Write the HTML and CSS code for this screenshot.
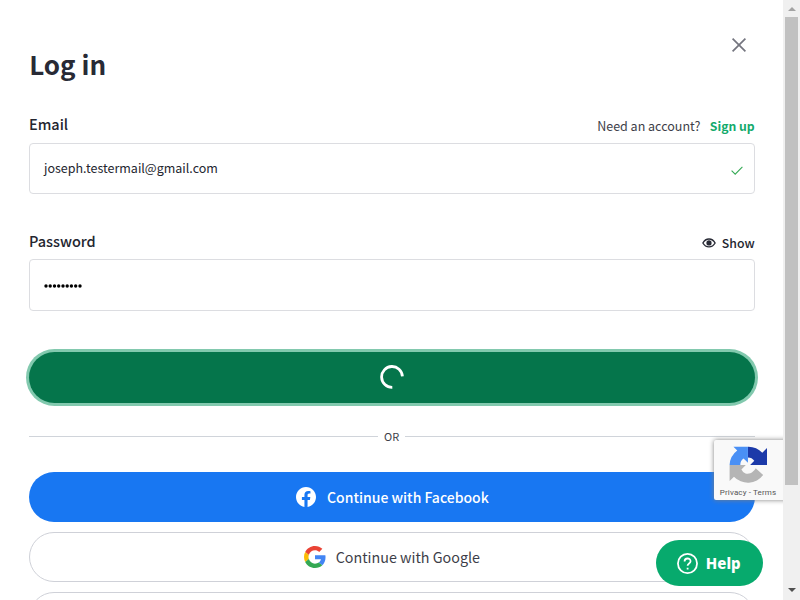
FILE: index.html
```html
<!DOCTYPE html>
<html lang="en">
<head>
<meta charset="utf-8">
<title>Log in</title>
<link rel="stylesheet" href="styles.css">
</head>
<body>
<div class="window">
  <main class="login">
    <header class="header">
      <h1 class="title">Log in</h1>
      <svg class="close" viewBox="0 0 16 16"><path d="M1.6 1.6 14.4 14.4M14.4 1.6 1.6 14.4"/></svg>
    </header>
    <section class="field">
      <div class="field-head">
        <label class="label label-email">Email</label>
        <p class="signup"><span class="need">Need an account?</span><a class="link">Sign up</a></p>
      </div>
      <div class="input">
        <span class="email">joseph.testermail@gmail.com</span>
        <svg class="check" viewBox="0 0 12 9"><path d="M.6 4.7 4.2 8.2 11.4.8"/></svg>
      </div>
    </section>
    <section class="field">
      <div class="field-head">
        <label class="label label-password">Password</label>
        <div class="show">
          <svg class="eye" viewBox="0 0 14 10"><path class="lid" d="M.9 5C3.8-.4 10.2-.4 13.1 5 10.2 10.2 3.8 10.2.9 5Z"/><circle cx="7" cy="4.9" r="2.6"/></svg>
          <span class="show-text">Show</span>
        </div>
      </div>
      <div class="input">
        <svg class="dots" viewBox="0 0 38 4"><g><circle cx="2" cy="2" r="1.7"/><circle cx="6.2" cy="2" r="1.7"/><circle cx="10.5" cy="2" r="1.7"/><circle cx="14.7" cy="2" r="1.7"/><circle cx="19" cy="2" r="1.7"/><circle cx="23.2" cy="2" r="1.7"/><circle cx="27.4" cy="2" r="1.7"/><circle cx="31.7" cy="2" r="1.7"/><circle cx="36" cy="2" r="1.7"/></g></svg>
      </div>
    </section>
    <button class="submit"><svg class="spinner" viewBox="0 0 24 24"><path d="M12.3 22.3A10.4 10.4 0 1 1 22.4 11.4"/></svg></button>
    <div class="divider"><span class="or">OR</span></div>
    <div class="providers">
      <button class="provider facebook">
        <svg class="fb-icon" viewBox="0 0 24 24"><path d="M24 12.07C24 5.4 18.63 0 12 0S0 5.4 0 12.07c0 6.03 4.39 11.02 10.13 11.93v-8.44H7.08v-3.49h3.05V9.41c0-3.02 1.79-4.69 4.53-4.69 1.31 0 2.68.24 2.68.24v2.97h-1.51c-1.49 0-1.96.93-1.96 1.89v2.25h3.33l-.53 3.49h-2.8V24C19.61 23.09 24 18.1 24 12.07Z"/></svg>
        <span class="fb-text">Continue with Facebook</span>
      </button>
      <button class="provider google">
        <svg class="g-icon" viewBox="0 0 48 48"><path fill="#ea4335" d="M24 9.5c3.54 0 6.71 1.22 9.21 3.6l6.85-6.85C35.9 2.38 30.47 0 24 0 14.62 0 6.51 5.38 2.56 13.22l7.98 6.19C12.43 13.72 17.74 9.5 24 9.5z"/><path fill="#4285f4" d="M46.98 24.55c0-1.57-.15-3.09-.38-4.55H24v9.02h12.94c-.58 2.96-2.26 5.48-4.78 7.18l7.73 6c4.51-4.18 7.09-10.36 7.09-17.65z"/><path fill="#fbbc05" d="M10.53 28.59c-.48-1.45-.76-2.99-.76-4.59s.27-3.14.76-4.59l-7.98-6.19C.92 16.46 0 20.12 0 24s.92 7.54 2.56 10.78l7.97-6.19z"/><path fill="#34a853" d="M24 48c6.48 0 11.93-2.13 15.89-5.81l-7.73-6c-2.15 1.45-4.92 2.3-8.16 2.3-6.26 0-11.57-4.22-13.47-9.91l-7.98 6.19C6.51 42.62 14.62 48 24 48z"/></svg>
        <span class="g-text">Continue with Google</span>
      </button>
      <button class="provider apple"></button>
    </div>
  </main>
  <aside class="scrollbar"><i class="arrow up"></i><i class="thumb"></i><i class="arrow down"></i></aside>
</div>
<div class="badge-clip">
  <div class="badge">
    <svg class="captcha" viewBox="0 0 64 64"><path fill="#1c3aa9" d="M64 32V3.5l-7.9 7.9A32 32 0 0 0 32 1.2v18.2a13 13 0 0 1 10.6 5.6l-7 7Z"/><path fill="#4a90f5" d="M31.9 1.2H7.5l6.4 6.4A32 32 0 0 0 1 32h18.1a13 13 0 0 1 5.4-11.1l7.4 7.4Z"/><path fill="#b5b5b5" d="M1 32v27l7.4-7.4A32 32 0 0 0 57.5 49L45 37.5a15 15 0 0 1-5.6 6.4c-2.6 2-6.4 3.7-11.6 2.4a13 13 0 0 1-6.9-6.8l7.4-7.5Z"/></svg>
    <span class="terms">Privacy - Terms</span>
  </div>
</div>
<button class="help">
  <svg class="help-icon" viewBox="0 0 20 20"><circle cx="10" cy="10" r="9.1"/><path d="M7.2 8.2c0-4 5.7-3.8 5.7-.4 0 2.3-2.8 2.1-2.8 4.4M10.1 14v1.7"/></svg>
  <span class="help-text">Help</span>
</button>
</body>
</html>
```
FILE: styles.css
```css
* { box-sizing: border-box; }
body { margin: 0; width: 800px; height: 600px; overflow: hidden; background: #fff; color: #24262f; font-family: "Noto Sans CJK SC", "Noto Sans", sans-serif; }
button { margin: 0; padding: 0; border: 0; font: inherit; }
p, h1 { margin: 0; }
svg { display: block; flex: none; fill: none; }
span, label, a, h1 { white-space: nowrap; }
.window { display: flex; height: 600px; }
.login { flex: 1; padding: 33px 28.4px 0 28.6px; overflow: hidden; }
.header { display: flex; justify-content: space-between; height: 77px; }
.title { padding-left: .6px; font-size: 26px; line-height: 62px; font-weight: 700; color: #282a35; }
.close { width: 16px; height: 16px; margin: 4px 8px 0 0; stroke: #74757f; stroke-width: 1.7; }
.field { height: 116.4px; }
.field-head { display: flex; justify-content: space-between; height: 33px; line-height: 28px; }
.label { padding-left: .4px; font-size: 14.5px; font-weight: 500; }
.label-password { line-height: 30px; }
.signup { display: flex; gap: 9.5px; font-size: 12.5px; line-height: 31px; }
.need { color: #3d3e48; }
.link { color: #13aa6c; font-weight: 700; font-size: 12.2px; line-height: 33px; }
.input { display: flex; align-items: center; justify-content: space-between; height: 51.2px; padding: 0 11px 0 14.4px; border: 1px solid #dcdde1; border-radius: 4px; }
.email { font-size: 12.5px; line-height: 48px; margin-top: -2px; }
.check { width: 12px; height: 9px; margin-top: 4px; stroke: #35aa55; stroke-width: 1.1; }
.show { display: flex; gap: 6px; font-size: 12.3px; font-weight: 500; line-height: 34px; }
.eye { width: 14px; height: 10px; margin-top: 11.6px; fill: #282a35; }
.lid { fill: none; stroke: #282a35; stroke-width: 1.4; }
.dots { width: 38px; height: 4px; margin-top: 3px; fill: #000; }
.submit { display: flex; align-items: center; justify-content: center; width: 100%; height: 51px; margin-top: 8.9px; border-radius: 26px; background: #05754b; box-shadow: 0 0 0 3px #82c9ae; }
.spinner { width: 24px; height: 24px; stroke: #fff; stroke-width: 2.8; }
.divider { display: flex; align-items: center; gap: 6px; height: 20px; margin: 23.5px 0 25.7px; }
.divider::before, .divider::after { content: ""; flex: 1; height: 1px; background: #d0d4da; }
.or { font-size: 11px; line-height: 20px; color: #3d3e48; }
.providers { display: grid; gap: 9.8px; }
.provider { display: flex; align-items: center; justify-content: center; height: 50.2px; border-radius: 26px; font-size: 14.3px; }
.facebook { gap: 11px; padding-left: 1.6px; background: #1877f2; color: #fff; font-weight: 500; font-size: 14px; }
.fb-icon { width: 20px; height: 20px; fill: #fff; }
.google { gap: 9.5px; padding-left: 1px; color: #3d3e48; background: #fff; border: 1px solid #cfd1d8; }
.g-icon { width: 22px; height: 22px; }
.apple { background: #fff; border: 1px solid #cfd1d8; }
.scrollbar { display: flex; flex-direction: column; align-items: center; width: 17px; background: #f0f0f0; }
.thumb { width: 13px; height: 468px; margin-top: 8px; background: #c1c1c1; }
.arrow { width: 0; height: 0; border: 3.5px solid transparent; }
.up { margin-top: 7px; margin-bottom: -2px; height: 4px; border-width: 0 4px 4px; border-bottom-color: #a3a3a3; }
.down { margin-top: 103px; border-width: 4px 4px 0; border-top-color: #505050; }
.badge-clip { position: absolute; left: 703px; top: 430px; width: 80px; height: 82px; padding: 10px 0 0 11px; overflow: hidden; }
.badge { display: flex; flex-direction: column; align-items: center; width: 80px; height: 60px; padding: 6px 12px 0 0; border-radius: 2px; background: #f9f9f9; box-shadow: 0 0 5px #808080; }
.captcha { width: 38px; height: 38px; }
.terms { margin-top: 3px; font: 8px/11px Roboto, sans-serif; letter-spacing: .13px; color: #555; }
.help { position: absolute; left: 656px; top: 540px; width: 107px; height: 46px; padding-right: 1.5px; display: flex; align-items: center; justify-content: center; gap: 8px; border-radius: 23px; background: #07aa6d; color: #fff; }
.help-icon { width: 21px; height: 21px; stroke: #fff; stroke-width: 1.7; }
.help-text { font: 800 15px/46px "Noto Sans", sans-serif; }
```
